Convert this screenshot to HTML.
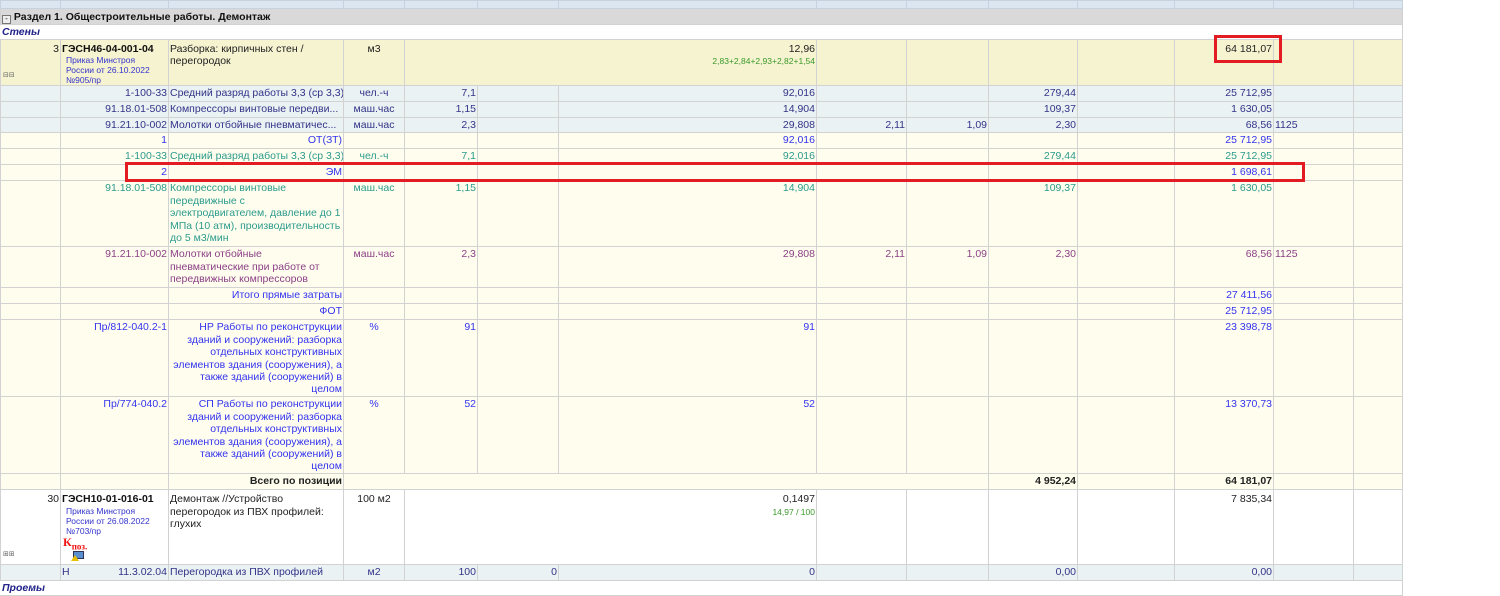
<!DOCTYPE html>
<html><head><meta charset="utf-8"><style>
body{margin:0;width:1500px;height:592px;overflow:hidden;background:#fff;font-family:"Liberation Sans","DejaVu Sans",sans-serif;font-size:10.5px;position:relative}
table{border-collapse:collapse;table-layout:fixed;width:1402px;position:absolute;left:0;top:0}
td{border:1px solid #d2d2d2;padding:1px 1px 0;vertical-align:top;overflow:hidden;line-height:12.4px;white-space:nowrap}
.r{text-align:right}.c{text-align:center}.w{white-space:normal}
.hd td{background:#dce6f1;border-color:#c6d2de;padding:0}
.sec td{background:#d9d9d9;font-weight:bold;color:#111}
.pos td{background:#f6f3d0;color:#222;padding-top:3px}
.bl td{background:#eaf2f3;color:#333388}
.ye td{background:#fffeee}
.wh td{background:#fff}
.b{color:#3333ee}.t{color:#2b9a8c}.p{color:#8b3f86}.red{color:#ee2222}
.sm{font-size:8.5px;color:#3333cc;line-height:10px;padding-left:4px}
.gr{font-size:8.5px;color:#3a9a2a}
.box{position:absolute;border:3px solid #e31b23;box-sizing:border-box}
</style></head><body>
<table>
<colgroup><col style="width:60px"><col style="width:108px"><col style="width:175px"><col style="width:61px"><col style="width:73px"><col style="width:81px"><col style="width:258px"><col style="width:90px"><col style="width:82px"><col style="width:89px"><col style="width:97px"><col style="width:99px"><col style="width:80px"><col style="width:49px"></colgroup>
<tr class="hd" style="height:8px"><td></td><td></td><td></td><td></td><td></td><td></td><td></td><td></td><td></td><td></td><td></td><td></td><td></td><td></td></tr>
<tr class="sec" style="height:16px"><td colspan="14" style="line-height:14px"><span style="display:inline-block;width:7px;height:7px;border:1px solid #777;background:#eee;font-size:8px;line-height:6px;text-align:center;font-weight:normal;vertical-align:-1px">-</span> Раздел 1. Общестроительные работы. Демонтаж</td></tr>
<tr class="wh" style="height:15px"><td colspan="14" style="color:#22228a;font-weight:bold;font-style:italic;border-left-color:transparent">Стены</td></tr>
<tr class="pos" style="height:45px"><td class="r" style="position:relative">3<div style="position:absolute;left:2px;bottom:3px;font-size:7px;color:#666">⊟⊟</div></td><td><b style="color:#111">ГЭСН46-04-001-04</b><div class="sm">Приказ Минстроя<br>России от 26.10.2022<br>№905/пр</div></td><td class="w">Разборка: кирпичных стен / перегородок</td><td class="c">м3</td><td colspan="3" class="r">12,96<br><span class="gr">2,83+2,84+2,93+2,82+1,54</span></td><td></td><td></td><td></td><td></td><td class="r">64 181,07</td><td></td><td></td></tr>
<tr class="bl" style="height:16px"><td></td><td class="r">1-100-33</td><td>Средний разряд работы 3,3 (ср 3,3)</td><td class="c">чел.-ч</td><td class="r">7,1</td><td></td><td class="r">92,016</td><td></td><td></td><td class="r">279,44</td><td></td><td class="r">25 712,95</td><td></td><td></td></tr>
<tr class="bl" style="height:16px"><td></td><td class="r">91.18.01-508</td><td>Компрессоры винтовые передви...</td><td class="c">маш.час</td><td class="r">1,15</td><td></td><td class="r">14,904</td><td></td><td></td><td class="r">109,37</td><td></td><td class="r">1 630,05</td><td></td><td></td></tr>
<tr class="bl" style="height:15px"><td></td><td class="r">91.21.10-002</td><td>Молотки отбойные пневматичес...</td><td class="c">маш.час</td><td class="r">2,3</td><td></td><td class="r">29,808</td><td class="r">2,11</td><td class="r">1,09</td><td class="r">2,30</td><td></td><td class="r">68,56</td><td>1125</td><td></td></tr>
<tr class="ye b" style="height:16px"><td></td><td class="r b">1</td><td class="r b">ОТ(ЗТ)</td><td></td><td></td><td></td><td class="r b">92,016</td><td></td><td></td><td></td><td></td><td class="r b">25 712,95</td><td></td><td></td></tr>
<tr class="ye" style="height:16px"><td></td><td class="r t">1-100-33</td><td class="t">Средний разряд работы 3,3 (ср 3,3)</td><td class="c t">чел.-ч</td><td class="r t">7,1</td><td></td><td class="r t">92,016</td><td></td><td></td><td class="r t">279,44</td><td></td><td class="r t">25 712,95</td><td></td><td></td></tr>
<tr class="ye" style="height:16px"><td></td><td class="r b">2</td><td class="r b">ЭМ</td><td></td><td></td><td></td><td></td><td></td><td></td><td></td><td></td><td class="r b">1 698,61</td><td></td><td></td></tr>
<tr class="ye" style="height:66px"><td></td><td class="r t">91.18.01-508</td><td class="w t">Компрессоры винтовые передвижные с электродвигателем, давление до 1 МПа (10 атм), производительность до 5 м3/мин</td><td class="c t">маш.час</td><td class="r t">1,15</td><td></td><td class="r t">14,904</td><td></td><td></td><td class="r t">109,37</td><td></td><td class="r t">1 630,05</td><td></td><td></td></tr>
<tr class="ye" style="height:41px"><td></td><td class="r p">91.21.10-002</td><td class="w p">Молотки отбойные пневматические при работе от передвижных компрессоров</td><td class="c p">маш.час</td><td class="r p">2,3</td><td></td><td class="r p">29,808</td><td class="r p">2,11</td><td class="r p">1,09</td><td class="r p">2,30</td><td></td><td class="r p">68,56</td><td class="p">1125</td><td></td></tr>
<tr class="ye" style="height:16px"><td></td><td></td><td class="r b">Итого прямые затраты</td><td></td><td></td><td></td><td></td><td></td><td></td><td></td><td></td><td class="r b">27 411,56</td><td></td><td></td></tr>
<tr class="ye" style="height:16px"><td></td><td></td><td class="r b">ФОТ</td><td></td><td></td><td></td><td></td><td></td><td></td><td></td><td></td><td class="r b">25 712,95</td><td></td><td></td></tr>
<tr class="ye" style="height:77px"><td></td><td class="r b">Пр/812-040.2-1</td><td class="w r b">НР Работы по реконструкции зданий и сооружений: разборка отдельных конструктивных элементов здания (сооружения), а также зданий (сооружений) в целом</td><td class="c b">%</td><td class="r b">91</td><td></td><td class="r b">91</td><td></td><td></td><td></td><td></td><td class="r b">23 398,78</td><td></td><td></td></tr>
<tr class="ye" style="height:77px"><td></td><td class="r b">Пр/774-040.2</td><td class="w r b">СП Работы по реконструкции зданий и сооружений: разборка отдельных конструктивных элементов здания (сооружения), а также зданий (сооружений) в целом</td><td class="c b">%</td><td class="r b">52</td><td></td><td class="r b">52</td><td></td><td></td><td></td><td></td><td class="r b">13 370,73</td><td></td><td></td></tr>
<tr class="ye" style="height:16px;color:#222"><td></td><td></td><td class="r"><b>Всего по позиции</b></td><td colspan="6"></td><td class="r"><b>4 952,24</b></td><td></td><td class="r"><b>64 181,07</b></td><td></td><td></td></tr>
<tr class="wh" style="height:75px;color:#222"><td class="r" style="position:relative;padding-top:3px">30<div style="position:absolute;left:2px;bottom:3px;font-size:7px;color:#666">⊞⊞</div></td><td style="position:relative;padding-top:3px"><b style="color:#111">ГЭСН10-01-016-01</b><div class="sm">Приказ Минстроя<br>России от 26.08.2022<br>№703/пр</div><div style="color:#ee1111;font-weight:bold;font-family:'Liberation Serif',serif;font-size:12px;padding-left:1px">К<sub style="font-size:9px">поз.</sub></div><div style="position:absolute;left:12px;top:61px;width:9px;height:6px;background:#5a8fd0;border:1px solid #335"></div><div style="position:absolute;left:10px;top:65px;width:0;height:0;border-left:4px solid transparent;border-right:4px solid transparent;border-bottom:6px solid #e8c000"></div></td><td class="w" style="padding-top:3px">Демонтаж //Устройство перегородок из ПВХ профилей: глухих</td><td class="c" style="padding-top:3px">100 м2</td><td colspan="3" class="r" style="padding-top:3px">0,1497<br><span class="gr">14,97 / 100</span></td><td></td><td></td><td></td><td></td><td class="r" style="padding-top:3px">7 835,34</td><td></td><td></td></tr>
<tr class="bl" style="height:16px"><td></td><td class="red" style="position:relative"><span>Н</span><span style="position:absolute;right:1px">11.3.02.04</span></td><td class="red">Перегородка из ПВХ профилей</td><td class="c red">м2</td><td class="r red">100</td><td class="r red">0</td><td class="r red">0</td><td></td><td></td><td class="r red">0,00</td><td></td><td class="r red">0,00</td><td></td><td></td></tr>
<tr class="wh" style="height:14px"><td colspan="14" style="color:#22228a;font-weight:bold;font-style:italic;border-left-color:transparent">Проемы</td></tr>
</table>
<div class="box" style="left:1214px;top:35px;width:68px;height:28px"></div>
<div class="box" style="left:125px;top:162px;width:1180px;height:20px"></div>
</body></html>
